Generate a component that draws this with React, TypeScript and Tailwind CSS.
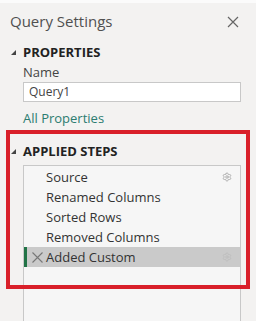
import { Settings } from "lucide-react";

const steps = ["Source", "Renamed Columns", "Sorted Rows", "Removed Columns", "Added Custom"];

function Caret() {
  return (
    <svg width="5" height="5" viewBox="0 0 5 5" className="shrink-0">
      <polygon points="5,0 5,5 0,5" fill="#444" />
    </svg>
  );
}

export default function App() {
  return (
    <div
      className="relative w-[256px] h-[321px] overflow-hidden bg-[#f3f2f1] text-[#333]"
      style={{ fontFamily: '"Open Sans", "Noto Sans", sans-serif' }}
    >
      <div className="h-[3px] bg-[#fbfbfb]" />

      <div className="flex items-center justify-between pl-[10px] pr-[17px] pt-[6px] h-[31px]">
        <span className="text-[15px] text-[#505050] leading-none">Query Settings</span>
        <svg width="12" height="12" viewBox="0 0 12 12">
          <path d="M1 1 L11 11 M11 1 L1 11" stroke="#666" strokeWidth="1.2" />
        </svg>
      </div>

      <div className="flex items-center gap-[7px] pl-[11px] mt-[10px] h-[16px]">
        <Caret />
        <span className="text-[13px] font-bold leading-none text-[#222]">PROPERTIES</span>
      </div>

      <div className="pl-[23px] pr-[15px]">
        <div className="text-[13px] leading-none mt-[6px] text-[#444]">Name</div>
        <div className="mt-[3px] h-[20px] bg-white border border-[#c8c8c8] flex items-center pl-[5px] text-[12px] text-[#444]">
          Query1
        </div>
        <div className="text-[13px] leading-none mt-[10px] text-[#2b7c70]">All Properties</div>
      </div>

      <div className="flex items-center gap-[7px] pl-[11px] mt-[18px] h-[16px]">
        <Caret />
        <span className="text-[13px] font-bold leading-none text-[#222]">APPLIED STEPS</span>
      </div>

      <div className="ml-[23px] mr-[15px] mt-[6px] h-[200px] border border-[#c8c8c8] bg-[#f6f6f6] pt-[1px]">
        {steps.map((s, i) => {
          const last = i === steps.length - 1;
          return (
            <div
              key={s}
              className={
                last
                  ? "relative h-[20px] flex items-center bg-[#cacaca] border-l-[3px] border-[#217346]"
                  : "relative h-[20px] flex items-center border-l-[3px] border-transparent"
              }
            >
              <div className="w-[19px] flex justify-center pl-[2px]">
                {last && (
                  <svg width="11" height="11" viewBox="0 0 11 11">
                    <path d="M0.5 0.5 L10.5 10.5 M10.5 0.5 L0.5 10.5" stroke="#777" strokeWidth="1.1" />
                  </svg>
                )}
              </div>
              <span className="text-[13px] leading-none text-[#333]">{s}</span>
              {(i === 0 || last) && (
                <Settings
                  size={10}
                  strokeWidth={2.2}
                  className="absolute right-[8px]"
                  color={last ? "#bdbdbd" : "#aaaaaa"}
                />
              )}
            </div>
          );
        })}
      </div>

      <div className="absolute left-[6px] top-[130px] w-[244px] h-[159px] border-[4px] border-[#d9202a]" />
    </div>
  );
}
